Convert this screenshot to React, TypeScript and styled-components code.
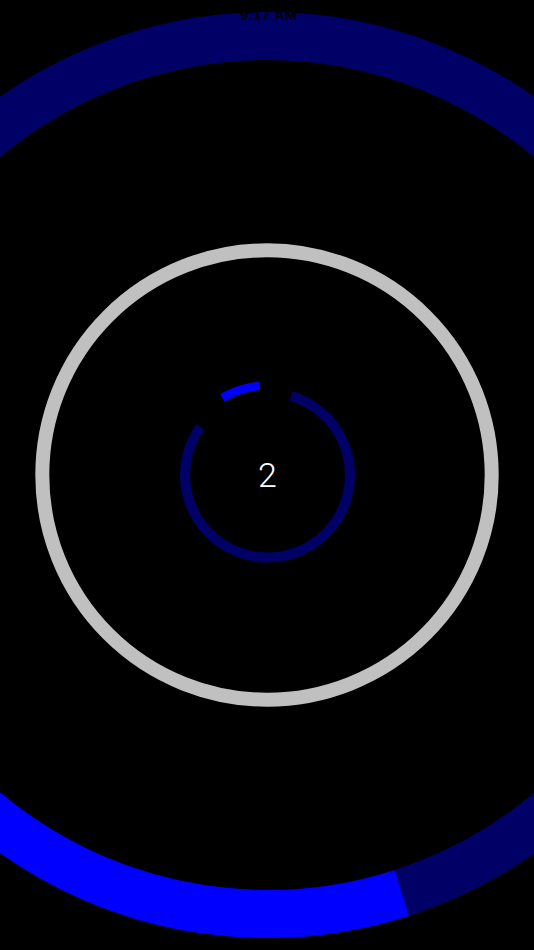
import React from 'react'
import styled, { createGlobalStyle } from 'styled-components'

const CX = 267.5
const CY = 475

// angles are screen degrees, clockwise from 3 o'clock
const arcPath = (r: number, from: number, to: number) => {
  const rad = (d: number) => (d * Math.PI) / 180
  const x1 = CX + r * Math.cos(rad(from))
  const y1 = CY + r * Math.sin(rad(from))
  const x2 = CX + r * Math.cos(rad(to))
  const y2 = CY + r * Math.sin(rad(to))
  const large = to - from > 180 ? 1 : 0
  return `M ${x1.toFixed(2)} ${y1.toFixed(2)} A ${r} ${r} 0 ${large} 1 ${x2.toFixed(2)} ${y2.toFixed(2)}`
}

const GlobalStyle = createGlobalStyle`
  html, body {
    margin: 0;
    padding: 0;
    background: #000;
  }
  body {
    font-family: "Liberation Sans", Arial, sans-serif;
  }
`

const Screen = styled.div`
  width: 534px;
  height: 950px;
  background: #000;
  overflow: hidden;
  display: grid;
  grid-template: 1fr / 1fr;
  & > * {
    grid-area: 1 / 1;
  }
`

const Dial = styled.svg`
  display: block;
  width: 534px;
  height: 950px;
`

const StatusBar = styled.div`
  align-self: start;
  justify-self: center;
  z-index: 1;
  padding: 5px 0 0 3px;
  line-height: 20px;
  height: 20px;
  font-family: "Liberation Sans", Arial, sans-serif;
  font-weight: 700;
  font-size: 15px;
  color: #000;
`

const Count = styled.div`
  align-self: center;
  justify-self: center;
  z-index: 1;
  font-family: Roboto, "Open Sans", sans-serif;
  font-weight: 300;
  font-size: 34px;
  line-height: 34px;
  color: #fff;
  padding-left: 1px;
`

const Ring = styled.circle<{ $color: string; $width: number }>`
  fill: none;
  stroke: ${({ $color }) => $color};
  stroke-width: ${({ $width }) => $width};
`

const Arc = styled.path<{ $color: string; $width: number }>`
  fill: none;
  stroke: ${({ $color }) => $color};
  stroke-width: ${({ $width }) => $width};
  stroke-linecap: butt;
`

const DARK = '#000066'
const BRIGHT = '#0000ff'
const GRAY = '#c0c0c0'

const App = () => {
  return (
    <>
      <GlobalStyle />
      <Screen>
        <Dial viewBox="0 0 534 950">
          <Ring cx={CX - 0.5} cy={CY} r={439} $color={DARK} $width={48} />
          <Arc d={arcPath(439, 72.2, 185)} $color={BRIGHT} $width={48} />
          <Ring cx={CX - 0.5} cy={CY} r={224.7} $color={GRAY} $width={14} />
          <Arc d={arcPath(82.5, -73.4, 215.6)} $color={DARK} $width={10} />
          <Arc d={arcPath(89.5, -120.3, -94.8)} $color={BRIGHT} $width={8.5} />
        </Dial>
        <StatusBar>9:17 AM</StatusBar>
        <Count>2</Count>
      </Screen>
    </>
  )
}

export default App
